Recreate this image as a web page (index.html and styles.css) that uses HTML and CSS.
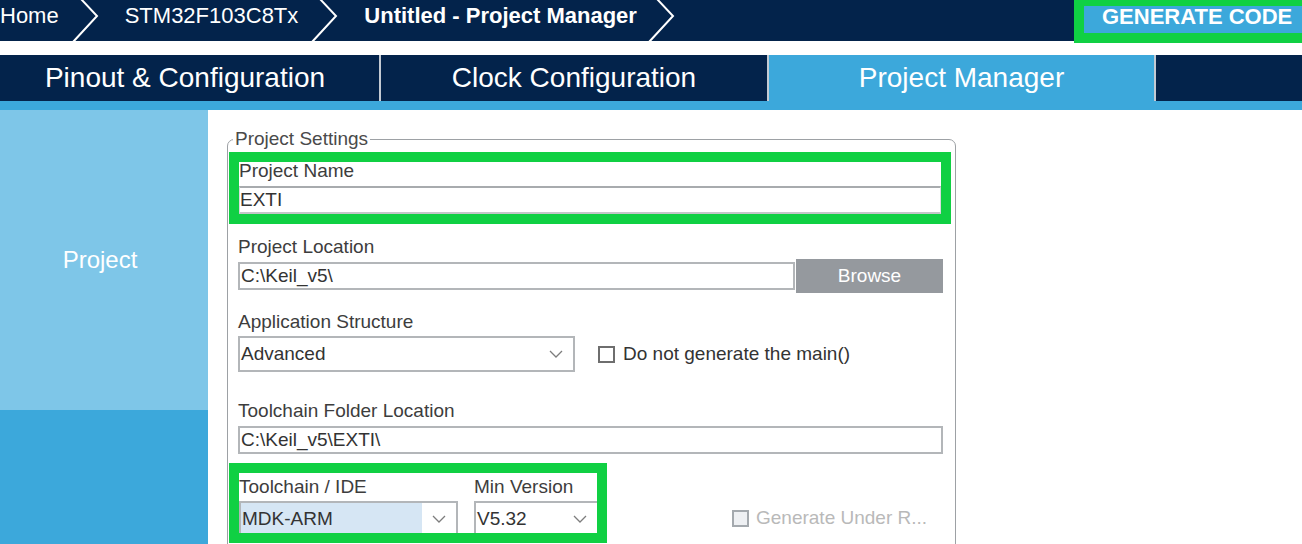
FILE: index.html
```html
<!DOCTYPE html>
<html lang="en">
<head>
<meta charset="utf-8">
<title>Untitled - Project Manager</title>
<link rel="stylesheet" href="styles.css">
</head>
<body>
<header class="topbar">
  <nav class="crumbs">
    <span class="crumb">Home</span>
    <svg class="chev" viewBox="0 0 26 41" aria-hidden="true"><polyline points="8,-1 24,16 0,42"/></svg>
    <span class="crumb">STM32F103C8Tx</span>
    <svg class="chev" viewBox="0 0 26 41" aria-hidden="true"><polyline points="8,-1 24,16 0,42"/></svg>
    <span class="crumb current">Untitled - Project Manager</span>
    <svg class="chev chev-last" viewBox="0 0 26 41" aria-hidden="true"><polyline points="8,-1 24,16 0,42"/></svg>
  </nav>
  <div class="generate-wrap"><div class="generate">GENERATE CODE</div></div>
</header>

<div class="tabs">
  <div class="tab tab-first">Pinout &amp; Configuration</div>
  <div class="tab">Clock Configuration</div>
  <div class="tab active">Project Manager</div>
  <div class="tab"></div>
</div>
<div class="strip"></div>

<main class="main">
  <aside class="sidebar">
    <div class="side-item">Project</div>
  </aside>
  <section class="content">
    <fieldset class="settings">
      <legend>Project Settings</legend>

      <div class="hl hl-name">
        <div class="label lbl-name">Project Name</div>
        <div class="input input-name">EXTI</div>
      </div>

      <div class="label lbl-loc">Project Location</div>
      <div class="row row-loc">
        <div class="input input-loc">C:\Keil_v5\</div>
        <div class="browse">Browse</div>
      </div>

      <div class="label lbl-app">Application Structure</div>
      <div class="row row-app">
        <div class="select select-app">
          <div class="val">Advanced</div>
          <div class="arrow"><svg viewBox="0 0 14 8" aria-hidden="true"><polyline points="1,1 7,7 13,1"/></svg></div>
        </div>
        <label class="check">
          <span class="box"></span>
          <span class="check-text">Do not generate the main()</span>
        </label>
      </div>

      <div class="label lbl-tc">Toolchain Folder Location</div>
      <div class="input input-tc">C:\Keil_v5\EXTI\</div>

      <div class="row row-bottom">
        <div class="hl hl-tool">
          <div class="col col-ide">
            <div class="label lbl-col">Toolchain / IDE</div>
            <div class="select select-ide">
              <div class="val val-sel">MDK-ARM</div>
              <div class="arrow"><svg viewBox="0 0 14 8" aria-hidden="true"><polyline points="1,1 7,7 13,1"/></svg></div>
            </div>
          </div>
          <div class="col col-ver">
            <div class="label lbl-col">Min Version</div>
            <div class="select select-ver">
              <div class="val">V5.32</div>
              <div class="arrow"><svg viewBox="0 0 14 8" aria-hidden="true"><polyline points="1,1 7,7 13,1"/></svg></div>
            </div>
          </div>
        </div>
        <label class="check check-disabled">
          <span class="box"></span>
          <span class="check-text">Generate Under R...</span>
        </label>
      </div>
    </fieldset>
  </section>
</main>
</body>
</html>
```

FILE: styles.css
```css
* { box-sizing: border-box; }

html, body { margin: 0; padding: 0; }

body {
  width: 1302px;
  height: 544px;
  overflow: hidden;
  background: #ffffff;
  font-family: "Liberation Sans", Arial, sans-serif;
}

/* ---------- top bar ---------- */
.topbar {
  height: 41px;
  background: #03234b;
  display: flex;
  justify-content: space-between;
  align-items: flex-start;
  position: relative;
  z-index: 2;
}

.crumbs {
  display: flex;
  align-items: flex-start;
  color: #ffffff;
  font-size: 22px;
  line-height: 32px;
}

.crumb { white-space: nowrap; }
.crumb.current { font-weight: bold; }

.chev {
  flex: none;
  width: 26px;
  height: 41px;
  margin: 0 26px 0 14px;
  overflow: visible;
}
.chev polyline {
  fill: none;
  stroke: #ffffff;
  stroke-width: 2;
}
.chev-last { margin-left: 12px; }

.generate-wrap {
  border-style: solid;
  border-color: #10d043;
  border-width: 6px 0 10px 10px;
  height: 43px;
}

.generate {
  width: 218px;
  height: 27px;
  background: #3ca8db;
  color: #ffffff;
  font-weight: bold;
  font-size: 22px;
  line-height: 21px;
  padding-left: 18px;
  white-space: nowrap;
}

/* ---------- tabs ---------- */
.tabs {
  margin-top: 14px;
  height: 46px;
  background: #03234b;
  display: grid;
  grid-template-columns: 379px 388px 387px 1fr;
}

.tab {
  color: #ffffff;
  font-size: 28px;
  display: flex;
  align-items: center;
  justify-content: center;
  white-space: nowrap;
}
.tab-first { padding-right: 9px; }
.tab + .tab { border-left: 2px solid #c3cad3; }
.tab.active { background: #3ca8db; }

.strip {
  height: 9px;
  background: #3ca8db;
}

/* ---------- main ---------- */
.main {
  display: flex;
  height: 434px;
}

.sidebar {
  flex: none;
  width: 208px;
  background: #3ca8db;
}

.side-item {
  height: 300px;
  background: #7ec6e8;
  color: #ffffff;
  font-size: 24px;
  display: flex;
  align-items: center;
  justify-content: center;
  padding-right: 8px;
}

.content {
  flex: 1;
  padding: 19px 0 0 19px;
}

.settings {
  width: 729px;
  margin: 0;
  border: 1px solid #9da1a5;
  border-radius: 7px;
  padding: 3px 12px 30px 10px;
  min-inline-size: auto;
}

.settings legend {
  font-size: 19px;
  line-height: 20px;
  color: #4a4a4a;
  padding: 0 2px;
  margin-left: -5px;
}

.label {
  font-size: 19px;
  line-height: 17px;
  color: #3d3d3d;
  white-space: nowrap;
}

.input {
  height: 28px;
  border: 2px solid #b3b6b9;
  font-size: 19px;
  line-height: 24px;
  padding-left: 1px;
  color: #333333;
  white-space: nowrap;
  background: #ffffff;
}

/* green annotation boxes */
.hl {
  border: 10px solid #10d043;
  margin-left: -9px;
}

.hl-name { width: 722px; }
.lbl-name { margin-bottom: 7px; }
.input-name {
  border-left-width: 1px;
  border-right-width: 1px;
  border-color: #a8abae #d9dbdd #c4c6c8 #d9dbdd;
  padding-left: 0;
}

.lbl-loc { margin-top: 14px; margin-bottom: 4px; }

.row {
  display: flex;
  align-items: center;
}

.row-loc { height: 34px; }
.input-loc { width: 557px; }

.browse {
  width: 147px;
  height: 34px;
  margin-left: 1px;
  background: #95999e;
  color: #ffffff;
  font-size: 19px;
  display: flex;
  align-items: center;
  justify-content: center;
}

.lbl-app { margin-top: 20px; margin-bottom: 6px; }

.select {
  display: flex;
  border: 2px solid #b3b6b9;
  background: #ffffff;
  font-size: 19px;
  color: #333333;
}
.select .val {
  flex: 1;
  display: flex;
  align-items: center;
  padding-left: 1px;
  white-space: nowrap;
}
.select .arrow {
  flex: none;
  width: 34px;
  display: flex;
  align-items: center;
  justify-content: center;
}
.select .arrow svg {
  width: 14px;
  height: 8px;
}
.select .arrow polyline {
  fill: none;
  stroke: #7d7d7d;
  stroke-width: 1.3;
}

.select-app { width: 337px; height: 36px; }

.check {
  display: flex;
  align-items: center;
  margin-left: 23px;
  font-size: 19px;
  color: #333333;
  white-space: nowrap;
}
.check .box {
  width: 17px;
  height: 17px;
  border: 2px solid #6e6e6e;
  background: #ffffff;
  margin-right: 8px;
}

.lbl-tc { margin-top: 30px; margin-bottom: 7px; }
.input-tc { width: 705px; }

.row-bottom {
  margin-top: 9px;
  align-items: flex-end;
}

.hl-tool {
  flex: none;
  width: 378px;
  height: 80px;
  overflow: hidden;
  padding-top: 5px;
  display: flex;
  gap: 16px;
}

.col { flex: none; }
.col-ide { width: 219px; }
.col-ver { width: 125px; }
.lbl-col { margin-bottom: 6px; }

.select-ide { width: 219px; height: 35px; }
.select-ver { width: 125px; height: 35px; }
.val-sel { background: #d6e6f4; }

.check-disabled {
  margin-left: 125px;
  margin-bottom: 14px;
  color: #b9b9b9;
}
.check-disabled .box {
  border-color: #a4a9ae;
  background: #eef0f3;
  margin-right: 7px;
}
```
